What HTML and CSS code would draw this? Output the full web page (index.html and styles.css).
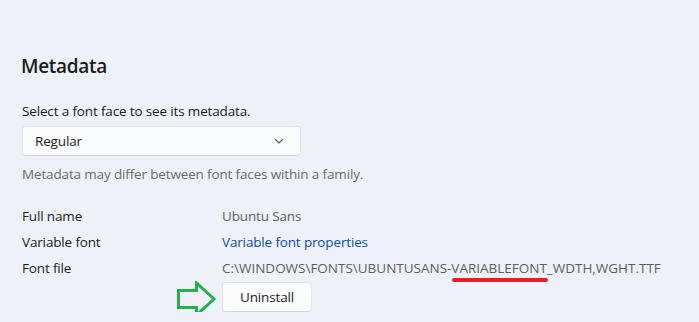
FILE: index.html
```html
<!DOCTYPE html>
<html lang="en">
<head>
  <meta charset="UTF-8">
  <meta name="viewport" content="width=device-width, initial-scale=1.0">
  <title>Metadata</title>
  <link rel="stylesheet" href="styles.css">
</head>
<body>
  <div class="section">
    <h2 class="title">Metadata</h2>
    <p class="hint">Select a font face to see its metadata.</p>

    <div class="select">
      <span>Regular</span>
      <svg class="chevron" width="10" height="6" viewBox="0 0 10 6">
        <path d="M1 1 L5 5 L9 1" fill="none" stroke="#5a5a5a" stroke-width="1.1"/>
      </svg>
    </div>

    <p class="note">Metadata may differ between font faces within a family.</p>

    <div class="props">
      <div class="row">
        <span class="label">Full name</span>
        <span class="value">Ubuntu Sans</span>
      </div>
      <div class="row">
        <span class="label">Variable font</span>
        <a class="link" href="#">Variable font properties</a>
      </div>
      <div class="row">
        <span class="label">Font file</span>
        <span class="value path">C:\WINDOWS\FONTS\UBUNTUSANS-<span class="marked">VARIABLEFONT</span>_WDTH,WGHT.TTF</span>
      </div>
    </div>

    <div class="actions">
      <svg class="arrow" width="40" height="37" viewBox="0 0 40 37">
        <polygon points="1.5,9.5 19.5,9.5 19.5,2 37,18 19.5,34 19.5,26.5 1.5,26.5" fill="none" stroke="#22b14c" stroke-width="3"/>
      </svg>
      <button class="btn">Uninstall</button>
    </div>
  </div>
</body>
</html>
```

FILE: styles.css
```css
body {
  margin: 0;
  padding: 0;
  background: #eef2f8;
  font-family: "Open Sans", "Noto Sans", Arial, sans-serif;
  font-size: 13.5px;
  letter-spacing: -0.15px;
  color: #1b1b1b;
}

.section {
  padding: 52px 22px 0 22px;
}

.title {
  margin: 0;
  font-size: 19px;
  line-height: 28px;
  font-weight: 600;
  letter-spacing: -0.3px;
  margin-left: -1px;
}

.hint {
  margin: 21px 0 0 0;
  line-height: 20px;
}

.select {
  width: 279px;
  height: 30px;
  box-sizing: border-box;
  margin-top: 5px;
  padding: 0 12px;
  display: flex;
  align-items: center;
  justify-content: space-between;
  background: #fbfcfd;
  border: 1px solid #e2e5ea;
  border-bottom-color: #d0d3d8;
  border-radius: 4px;
}

.chevron {
  margin-right: 4px;
}

.note {
  margin: 8px 0 0 0;
  line-height: 20px;
  color: #6b6b6b;
}

.props {
  margin-top: 19px;
}

.row {
  display: flex;
  height: 26px;
  align-items: center;
  white-space: nowrap;
}

.label {
  width: 200px;
  flex-shrink: 0;
}

.value {
  color: #5e5e5e;
}

.path {
  letter-spacing: -0.01px;
}

.link {
  color: #0b4fa0;
  text-decoration: none;
}

.marked {
  position: relative;
}

.marked::after {
  content: "";
  position: absolute;
  left: 1px;
  right: -1px;
  bottom: -5px;
  height: 4px;
  border-radius: 2px;
  background: #ed1c24;
}

.actions {
  position: relative;
  margin: 1px 0 0 200px;
}

.arrow {
  position: absolute;
  left: -45px;
  top: -1px;
}

.btn {
  width: 90px;
  height: 30px;
  font-family: inherit;
  font-size: 13.5px;
  letter-spacing: -0.15px;
  color: #1b1b1b;
  background: #fbfcfd;
  border: 1px solid #e2e5ea;
  border-bottom-color: #d0d3d8;
  border-radius: 4px;
}
```
